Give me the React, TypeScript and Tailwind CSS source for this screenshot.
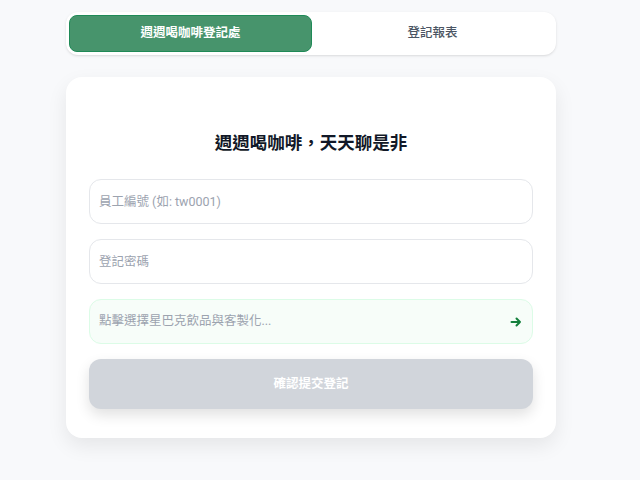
import { useState } from 'react';

const font = { fontFamily: 'Roboto, "Noto Sans CJK TC", sans-serif' };

const tabOn =
  'h-[37px] flex-1 rounded-lg border border-[#1f8a57] bg-[#47946c] text-[12.5px] font-bold text-white';
const tabOff = 'h-[37px] flex-1 rounded-lg text-[12.5px] font-medium text-[#4b5563]';
const field =
  'h-[45px] w-full rounded-xl border border-[#e5e7eb] bg-white px-[9px] text-[12.5px] text-[#374151] outline-none placeholder:text-[#9ca3af]';

export default function App() {
  const [tab, setTab] = useState<'register' | 'report'>('register');

  return (
    <div className="min-h-screen w-full bg-[#f8f9fb] pt-3 pr-[18px]" style={font}>
      <div className="mx-auto w-[490px]">
        {/* Tabs */}
        <div className="flex rounded-xl bg-white p-[3px] shadow-sm">
          <button onClick={() => setTab('register')} className={tab === 'register' ? tabOn : tabOff}>
            週週喝咖啡登記處
          </button>
          <button onClick={() => setTab('report')} className={tab === 'report' ? tabOn : tabOff}>
            登記報表
          </button>
        </div>

        {/* Card */}
        <div className="mt-[22px] rounded-2xl bg-white px-[23px] pt-[52px] pb-[29px] shadow-[0_8px_20px_rgba(0,0,0,0.08)]">
          <h1 className="mb-[22px] text-center text-[17.5px] leading-7 font-bold text-[#111827]">
            週週喝咖啡，天天聊是非
          </h1>

          <div className="flex flex-col gap-[15px]">
            <input placeholder="員工編號 (如: tw0001)" className={field} />
            <input type="password" placeholder="登記密碼" className={field} />
            <button className="flex h-[45px] w-full items-center justify-between rounded-xl border border-[#dcfce7] bg-[#f7fdf9] pr-[10px] pl-[9px] text-[12.5px] text-[#9ca3af]">
              <span>點擊選擇星巴克飲品與客製化...</span>
              <svg width="12" height="12" viewBox="0 0 12 12" fill="none" stroke="#15803d" strokeWidth="2" strokeLinecap="round" strokeLinejoin="round">
                <path d="M1.5 6h8.5M6.5 2.5 10 6l-3.5 3.5" />
              </svg>
            </button>
            <button
              disabled
              className="h-[50px] w-full rounded-xl bg-[#d1d5db] text-[12.5px] font-bold text-white shadow-[0_6px_14px_rgba(0,0,0,0.12)]"
            >
              確認提交登記
            </button>
          </div>
        </div>
      </div>
    </div>
  );
}
